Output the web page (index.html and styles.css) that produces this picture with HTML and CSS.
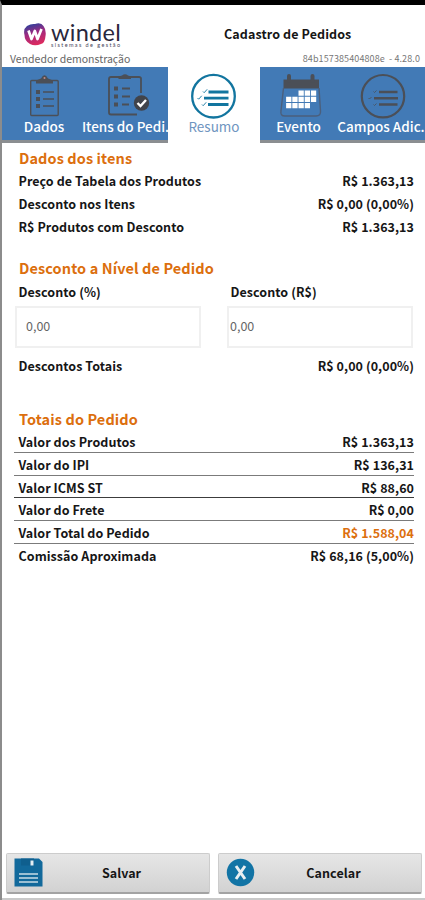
FILE: index.html
```html
<!DOCTYPE html>
<html lang="pt-BR">
<head>
<meta charset="UTF-8" />
<meta name="viewport" content="width=device-width, initial-scale=1" />
<title>Cadastro de Pedidos</title>
<link rel="stylesheet" href="styles.css">
</head>
<body>
  <div class="app">
    <header class="header">
      <div class="brand">
        <svg class="brand-icon" width="24" height="24" viewBox="0 0 24 24" aria-hidden="true">
          <defs>
            <linearGradient id="brandFill" x1="0.3" y1="0" x2="0.6" y2="1">
              <stop offset="0" stop-color="#28409c" />
              <stop offset="0.45" stop-color="#a02a80" />
              <stop offset="1" stop-color="#e02a5c" />
            </linearGradient>
          </defs>
          <path d="M4 4 Q8 1.500 12 2 Q18 0 20.500 4 Q23.500 8 22.500 14 Q22 21 18 22 Q12 24.500 7 22 Q1.500 19 1.500 13 Q0 7 4 4Z" fill="url(#brandFill)" />
          <path d="M5.500 8.500 L8.500 17 L11.800 9 L14.500 17 L18.500 7" fill="none" stroke="#fff" stroke-width="2.700" stroke-linejoin="round" />
        </svg>
        <div class="brand-text">
          <span class="brand-name">windel</span>
          <span class="brand-tag">sistemas de gestão</span>
        </div>
      </div>
      <h1 class="title">Cadastro de Pedidos</h1>
      <span class="seller">Vendedor demonstração</span>
      <span class="version">84b157385404808e&nbsp; - 4.28.0</span>
    </header>

    <nav class="tabs">
      <a class="tab tab-dados">
        <svg width="48" height="48" viewBox="0 0 48 48" fill="none" stroke="#4b4f57" stroke-width="1.400">
          <rect x="10.700" y="7.500" width="27.500" height="35" rx="1" />
          <path d="M16 10.500 V7.500 L21 5.500 Q24.500 -1 28 5.500 L33 7.500 V10.500Z" fill="#4b4f57" stroke="none" />
          <circle cx="24.500" cy="5" r="1" fill="#c58a80" stroke="none" />
          <path d="M16 19h4M16 26h4M16 33h4" stroke-width="4" />
          <path d="M23 19h11M23 26h11M23 33h11" />
        </svg>
        <span>Dados</span>
      </a>
      <a class="tab tab-itens">
        <svg width="48" height="48" viewBox="0 0 48 48" fill="none" stroke="#4b4f57" stroke-width="1.800">
          <path d="M38 20 V5.500 Q38 4 36 4 H8 Q6 4 6 6 V39.500 Q6 41.500 8 41.500 H34" />
          <path d="M15.500 6 V3.500 L19 2.500 Q22 0 25 2.500 L28 3.500 V6Z" fill="#4b4f57" stroke="none" />
          <path d="M11 15.500h4M11 23.500h4M11 31.500h4" stroke-width="4" />
          <path d="M19 15.500h8M19 23.500h8M19 31.500h7" />
          <circle cx="38.500" cy="30" r="7.700" fill="#41444b" stroke="none" />
          <path d="M34.500 30 L37.500 33 L43 27" stroke="#fff" stroke-width="2.400" />
        </svg>
        <span>Itens do Pedi.</span>
      </a>
      <a class="tab tab-resumo active">
        <svg width="48" height="48" viewBox="0 0 48 48" fill="none" stroke="#12759f">
          <circle cx="23.500" cy="23.200" r="21.300" stroke-width="2.300" />
          <path d="M18.500 19h20M14 25.200h24.500M18 31.500h20.500" stroke-width="2.800" />
          <path d="M13 18.500l1.200 1.200 3-3.400M7.500 25l1.200 1.200 3-3.400M12 31.500l1.200 1.200 3-3.400" stroke-width="0.900" />
        </svg>
        <span>Resumo</span>
      </a>
      <a class="tab tab-evento">
        <svg width="48" height="48" viewBox="0 0 48 48" fill="none">
          <path d="M8.500 6.500 H44 V15.500 H8.500Z" fill="#4b4f57" />
          <path d="M14 3v5M37.500 3v5" stroke="#4b4f57" stroke-width="4" stroke-linecap="round" />
          <path d="M8.500 15 L6 38 Q5 43 10 43 H41 Q46 43 45.500 38 L44 15" stroke="#4b5f7c" stroke-width="1.400" />
          <g fill="#fff">
            <path d="M23.500 17.500h5.300v5.300h-5.300zM29.700 17.500h5.300v5.300h-5.300zM35.900 17.500h5.300v5.300h-5.300z" />
            <path d="M11.100 23.700h5.300v5.300h-5.300zM17.300 23.700h5.300v5.300h-5.300zM23.500 23.700h5.300v5.300h-5.300zM29.700 23.700h5.300v5.300h-5.300zM35.900 23.700h5.300v5.300h-5.300z" />
            <path d="M11.100 29.900h5.300v5.300h-5.300zM17.300 29.900h5.300v5.300h-5.300zM23.500 29.900h5.300v5.300h-5.300zM29.700 29.900h5.300v5.300h-5.300z" />
          </g>
        </svg>
        <span>Evento</span>
      </a>
      <a class="tab tab-campos">
        <svg width="48" height="48" viewBox="0 0 48 48" fill="none" stroke="#4b4f57">
          <circle cx="24" cy="23.200" r="21.200" stroke-width="2.200" />
          <path d="M20 19h18.500M15 25.200h24M20 31.500h18.500" stroke-width="2.400" />
          <path d="M14.500 18.500l1 1 2-2M9.500 25l1 1 2-2M14.500 31.500l1 1 2-2" stroke-width="0.800" />
        </svg>
        <span>Campos Adic.</span>
      </a>
    </nav>

    <main class="content">
      <section class="block block-itens">
        <h2>Dados dos itens</h2>
        <div class="row"><span>Preço de Tabela dos Produtos</span><span class="value">R$ 1.363,13</span></div>
        <div class="row"><span>Desconto nos Itens</span><span class="value">R$ 0,00 (0,00%)</span></div>
        <div class="row"><span>R$ Produtos com Desconto</span><span class="value">R$ 1.363,13</span></div>
      </section>

      <section class="block block-desconto">
        <h2>Desconto a Nível de Pedido</h2>
        <div class="fields">
          <div class="field">
            <label for="descPerc">Desconto (%)</label>
            <input id="descPerc" type="text" value="0,00" />
          </div>
          <div class="field field-valor">
            <label for="descValor">Desconto (R$)</label>
            <input id="descValor" type="text" value="0,00" />
          </div>
        </div>
        <div class="row"><span>Descontos Totais</span><span class="value">R$ 0,00 (0,00%)</span></div>
      </section>

      <section class="block block-totais">
        <h2>Totais do Pedido</h2>
        <div class="row line"><span>Valor dos Produtos</span><span class="value">R$ 1.363,13</span></div>
        <div class="row line"><span>Valor do IPI</span><span class="value">R$ 136,31</span></div>
        <div class="row line dark"><span>Valor ICMS ST</span><span class="value">R$ 88,60</span></div>
        <div class="row line"><span>Valor do Frete</span><span class="value">R$ 0,00</span></div>
        <div class="row line"><span>Valor Total do Pedido</span><span class="value total">R$ 1.588,04</span></div>
        <div class="row"><span>Comissão Aproximada</span><span class="value">R$ 68,16 (5,00%)</span></div>
      </section>
    </main>

    <footer class="actions">
      <button class="btn" type="button">
        <svg width="29" height="29" viewBox="0 0 29 29">
          <path d="M0.500 0.500 H25 L28.500 4 V28.500 H0.500Z" fill="#12699b" />
          <path d="M7 0.500h13v7H7z" fill="#0f5f8e" />
          <rect x="16.500" y="2.500" width="3" height="5" fill="#e4eef3" />
          <path d="M5 16h19M5 20h19M5 24h19" stroke="#c8dce6" stroke-width="1.500" />
        </svg>
        <span>Salvar</span>
      </button>
      <button class="btn" type="button">
        <svg width="29" height="29" viewBox="0 0 29 29">
          <circle cx="14.500" cy="14.500" r="13.700" fill="#1274a5" />
          <path d="M10 8 L19 21 M19 8 L10 21" stroke="#e8eef1" stroke-width="3" />
        </svg>
        <span>Cancelar</span>
      </button>
    </footer>
  </div>
</body>
</html>
```
FILE: styles.css
```css
* {
  box-sizing: border-box;
}

body {
  margin: 0;
  background: #fff;
  color: #161616;
  font-family: "Noto Sans CJK SC", "Open Sans", sans-serif;
  font-size: 12.5px;
}

.app {
  display: flex;
  flex-direction: column;
  height: 900px;
  border-top: 5px solid #000;
  border-left: 2px solid #8c8c8c;
  overflow: hidden;
}

/* Cabeçalho */
.header {
  display: grid;
  grid-template-columns: 166px 1fr;
  grid-template-rows: 45px 17px;
  height: 62px;
  flex: none;
}

.brand {
  display: flex;
  gap: 4px;
  padding: 17px 0 0 21px;
}

.brand-icon {
  flex: none;
}

.brand-text {
  display: flex;
  flex-direction: column;
}

.brand-name {
  font-family: Lato, sans-serif;
  font-size: 23.5px;
  line-height: 20px;
  letter-spacing: 0.3px;
  color: #29273c;
}

.brand-tag {
  font-family: Lato, sans-serif;
  font-size: 5.5px;
  line-height: 6px;
  letter-spacing: 1.4px;
  color: #47455a;
  white-space: nowrap;
}

.title {
  margin: 0;
  padding: 20px 0 0 56px;
  font-size: 12.5px;
  line-height: 18px;
  letter-spacing: 0.1px;
}

.seller {
  padding-left: 8px;
  font-size: 10.5px;
  line-height: 18px;
  color: #666;
  white-space: nowrap;
}

.version {
  padding-right: 5px;
  text-align: right;
  font-size: 9px;
  line-height: 17px;
  letter-spacing: 0.1px;
  color: #777;
}

/* Abas */
.tabs {
  display: flex;
  flex: none;
  height: 76px;
}

.tab {
  display: flex;
  flex-direction: column;
  align-items: center;
  flex: none;
  padding-top: 6px;
  background: #427ab6;
  border-bottom: 3px solid #8b8e91;
  color: #fff;
  font-size: 13.5px;
  font-weight: 500;
  line-height: 11px;
  white-space: nowrap;
}

.tab svg {
  flex: none;
}

.tab-dados {
  width: 80px;
  padding-left: 4px;
}

.tab-itens {
  width: 86px;
  padding-left: 1px;
}

.tab-itens svg {
  margin-left: 2px;
}

.tab-resumo {
  width: 92px;
}

.tab-evento {
  width: 77px;
}

.tab-campos {
  flex: 1;
}

.tab-campos svg {
  margin-left: 3px;
}

.tab.active {
  background: #fff;
  border-bottom-color: #fff;
  color: #6f95c0;
  font-weight: 400;
}

/* Conteúdo */
.content {
  flex: 1;
  padding: 4px 11px 0 12px;
}

h2 {
  margin: 0;
  padding-left: 5px;
  font-size: 14.5px;
  line-height: 21px;
  letter-spacing: 0.1px;
  color: #dc6f0e;
}

.block-itens {
  height: 110px;
}

.block-itens h2,
.block-desconto h2 {
  margin-bottom: 1px;
}

.block-desconto {
  height: 151px;
}

.row {
  display: flex;
  justify-content: space-between;
  height: 22.8px;
  padding-left: 4.5px;
  font-weight: 700;
  line-height: 24px;
  letter-spacing: 0.06px;
  white-space: nowrap;
}

.row.line {
  border-bottom: 1px solid #7b7b7b;
}

.row.dark {
  border-bottom-color: #3c3c3c;
}

.total {
  color: #dc6f0e;
}

.fields {
  display: flex;
  gap: 26px;
  padding: 2px 0 6px 1px;
}

.field {
  display: flex;
  flex-direction: column;
  width: 186px;
}

.field label {
  padding-left: 3.5px;
  font-weight: 700;
  line-height: 22px;
  letter-spacing: 0.06px;
}

.field input {
  height: 42px;
  margin-top: 3px;
  padding: 0 9px 3px;
  border: 2px solid #f0f0f0;
  background: #fff;
  color: #666;
  font: inherit;
}

.field-valor input {
  padding-left: 1px;
}

.block-totais h2 {
  margin-bottom: 1px;
}

/* Botões do rodapé */
.actions {
  display: flex;
  gap: 8px;
  height: 48px;
  padding: 1px 3px 0 4px;
  border-bottom: 2px solid #c9c9c9;
}

.btn {
  display: flex;
  align-items: center;
  flex: 1;
  height: 41px;
  padding: 0 7px 1px;
  border: 1px solid #ccc;
  border-bottom: 2px solid #a3a3a3;
  border-radius: 2px;
  background: linear-gradient(#e6e6e6, #d2d2d2);
  color: #161616;
  font: inherit;
  font-weight: 700;
  letter-spacing: 0.06px;
}

.btn span {
  flex: 1;
  padding-right: 2px;
  text-align: center;
}
```
